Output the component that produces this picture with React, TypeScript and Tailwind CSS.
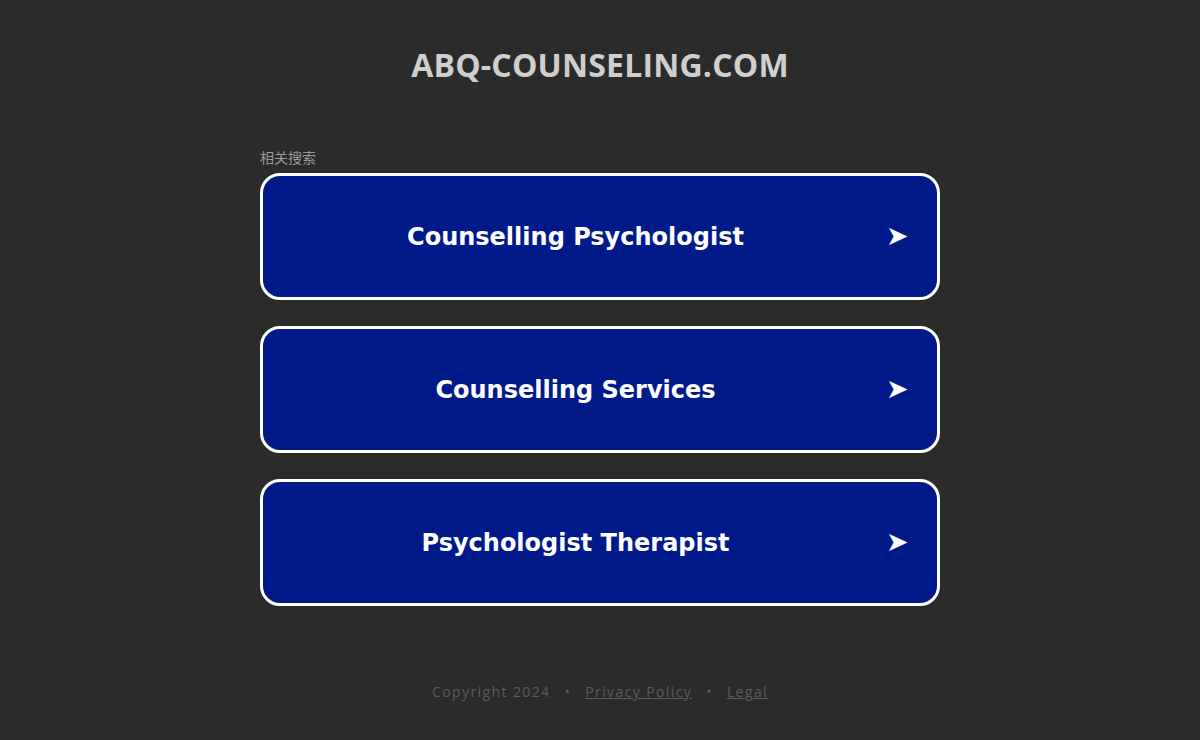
const links = ["Counselling Psychologist", "Counselling Services", "Psychologist Therapist"];

const App = () => {
  return (
    <div className="flex min-h-[740px] flex-col items-center bg-[#2b2b2b] font-['Open_Sans',sans-serif]">
      <header className="pt-[44px] text-[32px] font-bold leading-[42px] tracking-[0.2px] text-[#cfcfcf]">
        ABQ-COUNSELING.COM
      </header>

      <main className="mt-[62px] w-[680px]">
        <div className="mb-[7px] font-['Noto_Sans_CJK_SC',sans-serif] text-[14px] leading-[18px] text-[#999]">
          相关搜索
        </div>
        <ul className="flex flex-col gap-[26px]">
          {links.map((title) => (
            <li key={title}>
              <a
                href="#"
                className="flex h-[127px] items-center rounded-[20px] border-[3px] border-white bg-[#011a8a] pr-[29px]"
              >
                <span className="flex-1 pl-[2px] text-center font-['DejaVu_Sans',sans-serif] text-[24px] font-bold text-white">
                  {title}
                </span>
                <span className="-mt-[4px] w-[22px] text-[27px] leading-none text-white">➤</span>
              </a>
            </li>
          ))}
        </ul>
      </main>

      <footer className="mt-[75px] flex items-center gap-[14px] text-[14px] tracking-[1.4px] text-[#5c5c5c]">
        <span>Copyright 2024</span>
        <span>•</span>
        <a href="#" className="underline">Privacy Policy</a>
        <span>•</span>
        <a href="#" className="underline">Legal</a>
      </footer>
    </div>
  );
};
export default App;
